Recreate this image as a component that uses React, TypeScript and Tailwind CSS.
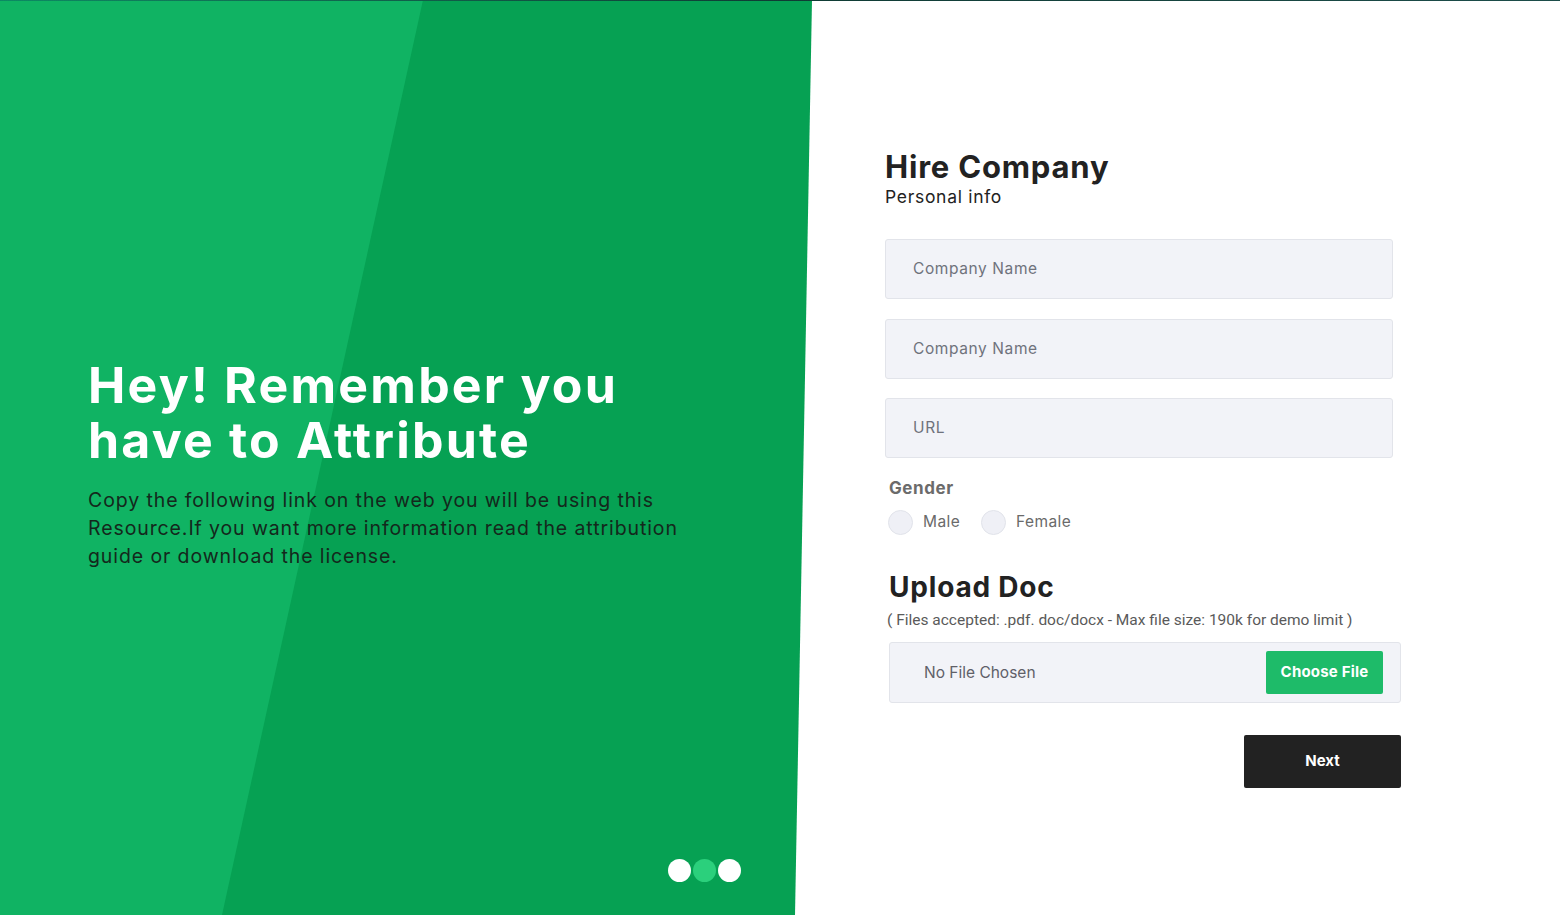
import React from 'react';

const font = { fontFamily: 'Inter, "Noto Sans", sans-serif' };

function Field({ placeholder }: { placeholder: string }) {
  return (
    <div className="flex h-[60px] w-[508px] items-center rounded-[3px] border border-[#e2e4ea] bg-[#f2f3f8] pl-[27px]">
      <span className="text-[15.5px] tracking-[0.6px] text-[#6f727c]">{placeholder}</span>
    </div>
  );
}

function Radio({ label }: { label: string }) {
  return (
    <label className="flex items-center gap-[10px]">
      <span className="h-[25px] w-[25px] rounded-full border border-[#e1e3ea] bg-[#eff0f6]" />
      <span className="text-[15.5px] tracking-[0.4px] text-[#6a6a6a]">{label}</span>
    </label>
  );
}

export default function App() {
  return (
    <div className="relative flex h-[915px] w-[1560px] overflow-hidden bg-white" style={font}>
      {/* thin top rule */}
      <div className="absolute left-0 top-0 z-10 h-px w-full bg-gradient-to-r from-[#0c8a63] via-[#0f3b34] to-[#1d4d4a]" />

      {/* Left panel */}
      <div className="relative flex w-[812px] flex-col">
        <svg className="absolute inset-0" width="812" height="915" viewBox="0 0 812 915">
          <polygon points="0,0 812,0 795,915 0,915" fill="#06a153" />
          <polygon points="0,0 423,0 222,915 0,915" fill="#10b363" />
        </svg>

        <div className="relative flex flex-1 flex-col pl-[88px] pt-[358px]">
          <h1 className="text-[50px] font-bold leading-[55px] tracking-[2.2px] text-white">
            Hey! Remember you
            <br />
            have to Attribute
          </h1>
          <p className="mt-[18px] text-[19.5px] leading-[28px] tracking-[0.9px] text-[#14281c]">
            Copy the following link on the web you will be using this
            <br />
            Resource.If you want more information read the attribution
            <br />
            guide or download the license.
          </p>

          <div className="mt-auto mb-[33px] flex pl-[580px]">
            <span className="h-[23px] w-[23px] rounded-full bg-white" />
            <span className="ml-[2px] h-[23px] w-[23px] rounded-full bg-[#2bd07c]" />
            <span className="ml-[2px] h-[23px] w-[23px] rounded-full bg-white" />
          </div>
        </div>
      </div>

      {/* Right panel */}
      <div className="flex flex-1 flex-col pl-[73px] pt-[148px]">
        <h2 className="text-[31px] font-bold leading-[38px] tracking-[0.8px] text-[#222]">Hire Company</h2>
        <p className="text-[17.5px] leading-[22px] tracking-[0.7px] text-[#222]">Personal info</p>

        <div className="mt-[31px] flex flex-col gap-[19.5px]">
          <Field placeholder="Company Name" />
          <Field placeholder="Company Name" />
          <Field placeholder="URL" />
        </div>

        <div className="pl-[4px]">
          <div className="mt-[18px] text-[17px] font-bold tracking-[0.6px] text-[#6b6b6b]">Gender</div>
          <div className="mt-[8px] flex gap-[21px] -ml-[1px]">
            <Radio label="Male" />
            <Radio label="Female" />
          </div>

          <h3 className="mt-[35px] text-[28px] font-bold leading-[34px] tracking-[0.8px] text-[#222]">Upload Doc</h3>
          <p
            className="mt-[5px] -ml-[2px] text-[15.5px] text-[#5a5a5a]"
            style={{ fontFamily: 'Roboto, "Liberation Sans", sans-serif' }}
          >
            ( Files accepted: .pdf. doc/docx - Max file size: 190k for demo limit )
          </p>

          <div className="mt-[10px] flex h-[61px] w-[512px] items-center justify-between rounded-[3px] border border-[#e2e4ea] bg-[#f2f3f8] pl-[34px] pr-[17px]">
            <span className="text-[15.5px] text-[#5f6068]">No File Chosen</span>
            <button className="h-[43px] w-[117px] rounded-[2px] bg-[#1ebb69] text-[15px] font-bold tracking-[0.2px] text-white">
              Choose File
            </button>
          </div>

          <div className="mt-[32px] flex w-[512px] justify-end">
            <button className="h-[53px] w-[157px] rounded-[2px] bg-[#222] text-[15px] font-bold text-white">
              Next
            </button>
          </div>
        </div>
      </div>
    </div>
  );
}
